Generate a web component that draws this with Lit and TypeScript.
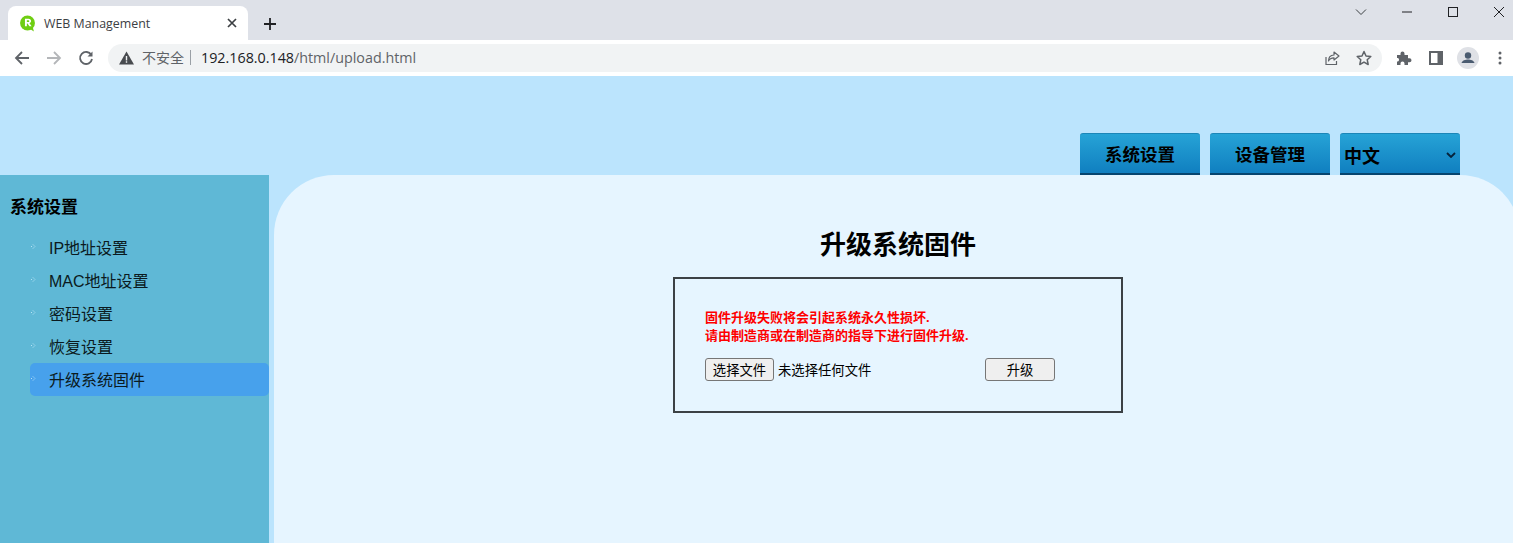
import { LitElement, html, css } from "lit";
import { customElement } from "lit/decorators.js";

const items = ["IP地址设置", "MAC地址设置", "密码设置", "恢复设置", "升级系统固件"];

@customElement("app-root")
export class AppRoot extends LitElement {
  static styles = css`
    :host { display: flex; flex-direction: column; width: 1513px; height: 543px; overflow: hidden; font-family: "Liberation Sans", "Noto Sans CJK SC", sans-serif; color: #000; background: #bbe4fd; }
    * { box-sizing: border-box; }
    .tabbar { height: 40px; background: #dee1e8; display: flex; align-items: flex-end; padding-left: 8px; flex: none; }
    .tab { width: 240px; height: 34px; background: #fff; border-radius: 8px 8px 0 0; display: flex; align-items: center; padding: 0 7px 0 11px; font-size: 12.400px; color: #3c4043; font-family: "Open Sans", "Liberation Sans", sans-serif; }
    .tab .fav { width: 17px; height: 17px; margin-right: 8px; flex: none; }
    .tab .title { flex: 1; }
    .tab .close { width: 14px; height: 14px; flex: none; margin-right: 2px; }
    .plus { width: 14px; height: 14px; margin: 0 0 9px 15px; flex: none; }
    .win { margin-left: auto; align-self: flex-start; display: flex; align-items: center; height: 24px; }
    .win svg { display: block; width: 14px; height: 14px; }
    .win .w1 { margin-right: 32px; }
    .win .w2 { margin-right: 32px; }
    .win .w3 { margin-right: 32px; }
    .win .w4 { margin-right: 7px; }
    .toolbar { height: 36px; background: #fff; display: flex; align-items: center; flex: none; padding-left: 14px; }
    .nav { width: 16px; height: 16px; flex: none; margin-right: 16px; }
    .nav.last { margin-right: 14px; }
    .omni { width: 1274px; height: 28px; border-radius: 14px; background: #f1f3f4; display: flex; align-items: center; padding: 0 0 1px 11px; font-size: 14.300px; color: #5f6368; flex: none; font-family: "Open Sans", "Liberation Sans", "Noto Sans CJK SC", sans-serif; }
    .omni .warn { width: 15px; height: 14px; flex: none; margin-right: 8px; }
    .omni .insecure { font-size: 14px; padding-right: 6px; border-right: 1px solid #9aa0a6; line-height: 15px; margin-right: 10px; }
    .omni .host { color: #202124; }
    .omni .spacer { flex: 1; }
    .omni .act { width: 16px; height: 16px; flex: none; margin-right: 16px; }
    .omni .act.last { margin-right: 10px; }
    .tools { display: flex; align-items: center; flex: none; margin-left: 14px; }
    .tools svg { display: block; flex: none; }
    .tools .t1 { width: 16px; height: 16px; margin-right: 17px; }
    .tools .t2 { width: 14px; height: 14px; margin-right: 14px; }
    .tools .t3 { width: 22px; height: 22px; margin-right: 19px; }
    .tools .t4 { width: 4px; height: 14px; }

    .header { height: 99px; flex: none; background: #bbe4fd; display: flex; justify-content: flex-end; align-items: flex-end; gap: 10px; padding-right: 53px; }
    .hbtn { width: 120px; height: 42px; border: 0; border-radius: 3px 3px 0 0; border-top: 1px solid #1b86b8; border-bottom: 2px solid #06456f; background: linear-gradient(#26a3d6, #107fc0); font: bold 17.500px "Liberation Sans", "Noto Sans CJK SC", sans-serif; color: #000; padding: 0; display: flex; align-items: center; justify-content: center; }
    .hbtn.sel { justify-content: space-between; padding: 2px 4px 0 4px; font-size: 18px; }
    .hbtn.sel svg { width: 10px; height: 6px; }
    .body { flex: 1; display: flex; min-height: 0; }
    .side { width: 269px; flex: none; background: #5fb8d6; padding: 22px 0 0 0; }
    .side h3 { margin: 0 0 13px 10px; font-size: 17px; line-height: 21px; font-weight: bold; }
    .side ul { list-style: none; margin: 0 0 0 30px; padding: 0; }
    .side li { height: 33px; display: flex; align-items: center; font-size: 16px; border-radius: 5px; color: #0b1a20; padding-bottom: 2px; }
    .side li svg { width: 7px; height: 7px; flex: none; margin-right: 12px; }
    .side li.on { background: #47a1ec; }
    .main { flex: 1; margin: 0 -7px 0 5px; background: #e6f5ff; border-radius: 60px 60px 0 0; display: flex; flex-direction: column; align-items: flex-start; padding: 54px 0 0 399px; }
    h2 { margin: 0 0 15px; width: 450px; text-align: center; font-size: 26px; line-height: 33px; font-weight: bold; }
    .box { width: 450px; height: 136px; border: 2px solid #3c4145; padding: 30px 30px 0 30px; }
    .msg { color: #f00; font-size: 13px; font-weight: bold; line-height: 18px; }
    .row { display: flex; align-items: center; margin-top: 13px; font-size: 13.33px; }
    .row button { height: 23px; border: 1px solid #767676; border-radius: 3px; background: #efefef; font: 13.33px "Liberation Sans", "Noto Sans CJK SC", sans-serif; color: #000; padding: 0; }
    .choose { width: 69px; }
    .none { margin-left: 4px; width: 207px; }
    .up { width: 70px; }
  `;

  render() {
    return html`
      <div class="tabbar">
        <div class="tab">
          <svg class="fav" viewBox="0 0 16 16"><circle cx="8" cy="7.500" r="7" fill="#6fce12"/><path d="M10 13l4 2.500-1-4z" fill="#6fce12"/><path d="M5.600 3.500h3.200c1.700 0 2.600.9 2.600 2.200 0 1-.6 1.700-1.500 2l2 3h-2.100L8 8H7.400v2.700H5.600zM7.400 5v1.700h1.200c.7 0 1-.3 1-.85S9.300 5 8.600 5z" fill="#fff"/></svg>
          <span class="title">WEB Management</span>
          <svg class="close" viewBox="0 0 14 14"><path d="M3 3l8 8M11 3l-8 8" stroke="#3c4043" stroke-width="1.700" fill="none"/></svg>
        </div>
        <svg class="plus" viewBox="0 0 14 14"><path d="M7 1v12M1 7h12" stroke="#202124" stroke-width="1.800" fill="none"/></svg>
        <div class="win">
          <svg class="w1" viewBox="0 0 14 14"><path d="M2 4.500l5 5 5-5" stroke="#3c4043" stroke-width="1" fill="none"/></svg>
          <svg class="w2" viewBox="0 0 14 14"><path d="M2 7h10" stroke="#202124" stroke-width="1" fill="none"/></svg>
          <svg class="w3" viewBox="0 0 14 14"><rect x="2.500" y="2.500" width="9" height="9" stroke="#202124" stroke-width="1" fill="none"/></svg>
          <svg class="w4" viewBox="0 0 14 14"><path d="M2 2l10 10M12 2L2 12" stroke="#202124" stroke-width="1" fill="none"/></svg>
        </div>
      </div>
      <div class="toolbar">
        <svg class="nav" viewBox="0 0 16 16"><path d="M15 8H2M8 2L2 8l6 6" stroke="#5f6368" stroke-width="1.800" fill="none"/></svg>
        <svg class="nav" viewBox="0 0 16 16"><path d="M1 8h13M8 2l6 6-6 6" stroke="#b4b6b9" stroke-width="1.800" fill="none"/></svg>
        <svg class="nav last" viewBox="0 0 16 16"><path d="M13.300 5A6 6 0 1 0 14 9" stroke="#5f6368" stroke-width="1.800" fill="none"/><path d="M14.500 1.500v5h-5z" fill="#5f6368"/></svg>
        <div class="omni">
          <svg class="warn" viewBox="0 0 15 14"><path d="M7.500 0.500L15 13.500H0z" fill="#484b4f"/><path d="M6.800 5h1.400v4.500H6.800zM6.800 10.300h1.400v1.400H6.800z" fill="#f1f3f4"/></svg>
          <span class="insecure">不安全</span>
          <span><span class="host">192.168.0.148</span>/html/upload.html</span>
          <span class="spacer"></span>
          <svg class="act" viewBox="0 0 16 16"><path d="M2 7v7.500h10.500V11" stroke="#5f6368" stroke-width="1.200" fill="none"/><path d="M10 2l5 4-5 4V7.800C7.500 7.800 5.500 8.800 4.500 11c0-3.500 2-5.800 5.500-6z" stroke="#5f6368" stroke-width="1.200" fill="none" stroke-linejoin="round"/></svg>
          <svg class="act last" viewBox="0 0 16 16"><path d="M8 1.500l2 4.500 4.800.5-3.600 3.200 1 4.800L8 12.100l-4.200 2.400 1-4.800L1.200 6.500 6 6z" stroke="#5f6368" stroke-width="1.500" fill="none" stroke-linejoin="round"/></svg>
        </div>
        <div class="tools">
          <svg class="t1" viewBox="0 0 16 16"><path d="M1 5h3.500V3.500a2 2 0 0 1 4 0V5H12v3.300h1.500a2 2 0 0 1 0 4H12V15H8.500v-1.500a2 2 0 0 0-4 0V15H1v-3.500h1a2 2 0 0 0 0-3.500H1z" fill="#5f6368"/></svg>
          <svg class="t2" viewBox="0 0 14 14"><path d="M0 0h14v14H0z" fill="#5f6368"/><path d="M2 2h6.500v10H2z" fill="#fff"/></svg>
          <svg class="t3" viewBox="0 0 22 22"><circle cx="11" cy="11" r="11" fill="#dfe1e6"/><circle cx="11" cy="8.500" r="3.200" fill="#4a5b70"/><path d="M4.500 16c.5-2.500 4-3.500 6.500-3.500s6 1 6.500 3.500z" fill="#4a5b70"/></svg>
          <svg class="t4" viewBox="0 0 4 14"><circle cx="2" cy="2" r="1.500" fill="#5f6368"/><circle cx="2" cy="7" r="1.500" fill="#5f6368"/><circle cx="2" cy="12" r="1.500" fill="#5f6368"/></svg>
        </div>
      </div>
      <div class="header">
        <button class="hbtn">系统设置</button>
        <button class="hbtn">设备管理</button>
        <div class="hbtn sel"><span>中文</span><svg viewBox="0 0 10 6"><path d="M1 1l4 4 4-4" stroke="#06223a" stroke-width="1.800" fill="none"/></svg></div>
      </div>
      <div class="body">
        <nav class="side">
          <h3>系统设置</h3>
          <ul>
            ${items.map((t, i) => html`<li class=${i === 4 ? "on" : ""}>
              <svg viewBox="0 0 7 7"><path d="M1 3.500h1.500M3 1.500l2 2-2 2" stroke="#cdeefb" stroke-width=".8" fill="none" stroke-dasharray="1 .6"/></svg>
              <span>${t}</span></li>`)}
          </ul>
        </nav>
        <main class="main">
          <h2>升级系统固件</h2>
          <div class="box">
            <div class="msg">固件升级失败将会引起系统永久性损坏.<br />请由制造商或在制造商的指导下进行固件升级.</div>
            <div class="row">
              <button class="choose">选择文件</button>
              <span class="none">未选择任何文件</span>
              <button class="up">升级</button>
            </div>
          </div>
        </main>
      </div>
    `;
  }
}
